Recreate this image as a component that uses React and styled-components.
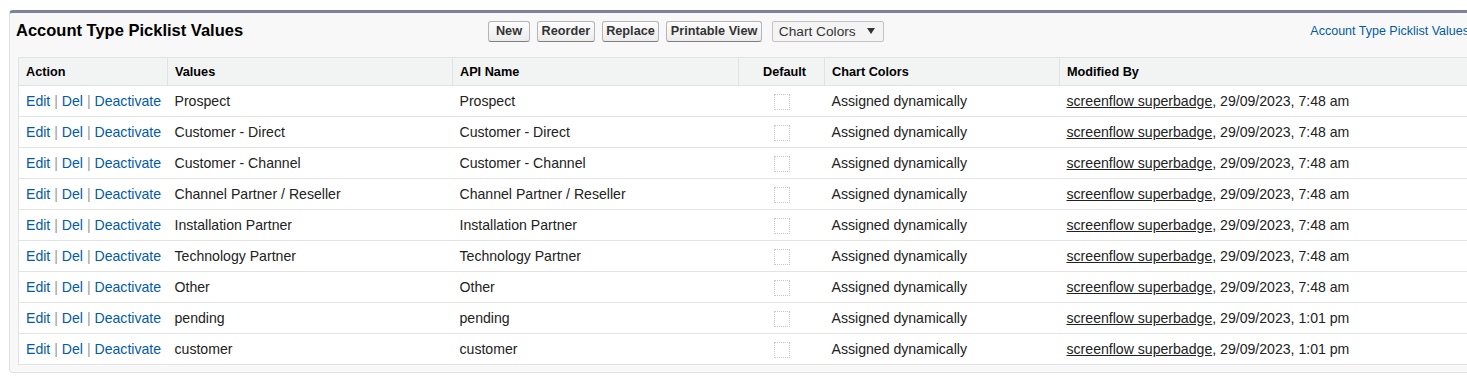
import * as React from "react";
import styled, { createGlobalStyle } from "styled-components";

const GlobalStyle = createGlobalStyle`
  html, body {
    margin: 0;
    padding: 0;
    background: #fff;
    overflow: hidden;
  }
  body {
    font-family: "Liberation Sans", Arial, sans-serif;
    color: #222;
  }
`;

const Page = styled.div`
  width: 1500px;
  padding: 10px 0 0 9px;
`;

const Panel = styled.div`
  width: 1480px;
  background: #f8f8f8;
  border: 1px solid #e0e3e5;
  border-top: 3px solid #7c8399;
  border-radius: 4px;
  padding: 0 0 7px 8px;
`;

const Header = styled.div`
  display: flex;
  align-items: center;
  height: 44px;
`;

const Title = styled.h2`
  margin: 0 0 0 -2px;
  width: 472px;
  font-size: 16.5px;
  font-weight: bold;
  color: #000;
  line-height: 20px;
  position: relative;
  top: -5px;
`;

const Buttons = styled.div`
  display: flex;
  gap: 7px;
  align-items: center;
  position: relative;
  top: -4px;
`;

const Button = styled.button`
  height: 21px;
  min-width: ${(p) => p.$minWidth || 0}px;
  padding: 0 3.5px;
  font-family: "Liberation Sans", Arial, sans-serif;
  font-size: 12.7px;
  font-weight: bold;
  color: #333;
  background: linear-gradient(#fdfdfd, #ececec);
  border: 1px solid #b5b5b5;
  border-bottom-color: #7f7f7f;
  border-radius: 3px;
  cursor: pointer;
`;

const Select = styled.div`
  display: flex;
  align-items: center;
  justify-content: space-between;
  width: 112px;
  height: 21px;
  box-sizing: border-box;
  margin-left: 3px;
  padding: 0 8px 0 6px;
  font-size: 13.7px;
  color: #333;
  background: #f4f4f4;
  border: 1px solid #c2c2c2;
  border-radius: 2px;
`;

const Arrow = styled.span`
  width: 0;
  height: 0;
  border-left: 4px solid transparent;
  border-right: 4px solid transparent;
  border-top: 6px solid #333;
`;

const HelpLink = styled.a`
  margin-left: auto;
  margin-right: 29px;
  font-size: 12.5px;
  color: #015ba7;
  text-decoration: none;
  white-space: nowrap;
  position: relative;
  top: -4px;
`;

const Table = styled.table`
  border-collapse: collapse;
  width: 1462px;
  background: #fff;
  border: 1px solid #e0e3e5;
  table-layout: fixed;
`;

const Th = styled.th`
  height: 27px;
  padding: 0 0 0 7px;
  font-size: 12.7px;
  font-weight: bold;
  color: #000;
  text-align: ${(p) => p.$align || "left"};
  padding-right: ${(p) => (p.$align === "right" ? "18px" : "0")};
  background: #f2f3f3;
  border: 1px solid #e0e3e5;
  border-top: none;
  white-space: nowrap;
`;

const Td = styled.td`
  height: 30px;
  padding: 0 0 0 7px;
  font-size: 14.1px;
  color: #222;
  border-bottom: 1px solid #e3e3e3;
  white-space: nowrap;
  text-align: ${(p) => p.$align || "left"};
`;

const ActionLink = styled.a`
  color: #015ba7;
  text-decoration: none;
`;

const Sep = styled.span`
  color: #999;
`;

const UserLink = styled.a`
  color: #222;
  text-decoration: underline;
`;

const CheckBox = styled.span`
  display: inline-block;
  width: 14px;
  height: 14px;
  border: 1px dotted #c8c8c8;
  vertical-align: middle;
  margin-left: -7px;
`;

const values = [
  ["Prospect", "7:48 am"],
  ["Customer - Direct", "7:48 am"],
  ["Customer - Channel", "7:48 am"],
  ["Channel Partner / Reseller", "7:48 am"],
  ["Installation Partner", "7:48 am"],
  ["Technology Partner", "7:48 am"],
  ["Other", "7:48 am"],
  ["pending", "1:01 pm"],
  ["customer", "1:01 pm"],
];

export default function App() {
  return (
    <Page>
      <GlobalStyle />
      <Panel>
        <Header>
          <Title>Account Type Picklist Values</Title>
          <Buttons>
            <Button $minWidth={42}>New</Button>
            <Button>Reorder</Button>
            <Button>Replace</Button>
            <Button>Printable View</Button>
            <Select>
              Chart Colors
              <Arrow />
            </Select>
          </Buttons>
          <HelpLink href="#">Account Type Picklist Values</HelpLink>
        </Header>
        <Table>
          <colgroup>
            <col style={{ width: 149 }} />
            <col style={{ width: 285 }} />
            <col style={{ width: 286 }} />
            <col style={{ width: 86 }} />
            <col style={{ width: 235 }} />
            <col />
          </colgroup>
          <thead>
            <tr>
              <Th>Action</Th>
              <Th>Values</Th>
              <Th>API Name</Th>
              <Th $align="right">Default</Th>
              <Th>Chart Colors</Th>
              <Th>Modified By</Th>
            </tr>
          </thead>
          <tbody>
            {values.map(([name, time]) => (
              <tr key={name}>
                <Td>
                  <ActionLink href="#">Edit</ActionLink> <Sep>|</Sep>{" "}
                  <ActionLink href="#">Del</ActionLink> <Sep>|</Sep>{" "}
                  <ActionLink href="#">Deactivate</ActionLink>
                </Td>
                <Td>{name}</Td>
                <Td>{name}</Td>
                <Td $align="center">
                  <CheckBox />
                </Td>
                <Td>Assigned dynamically</Td>
                <Td>
                  <UserLink href="#">screenflow superbadge</UserLink>,
                  29/09/2023, {time}
                </Td>
              </tr>
            ))}
          </tbody>
        </Table>
      </Panel>
    </Page>
  );
}
